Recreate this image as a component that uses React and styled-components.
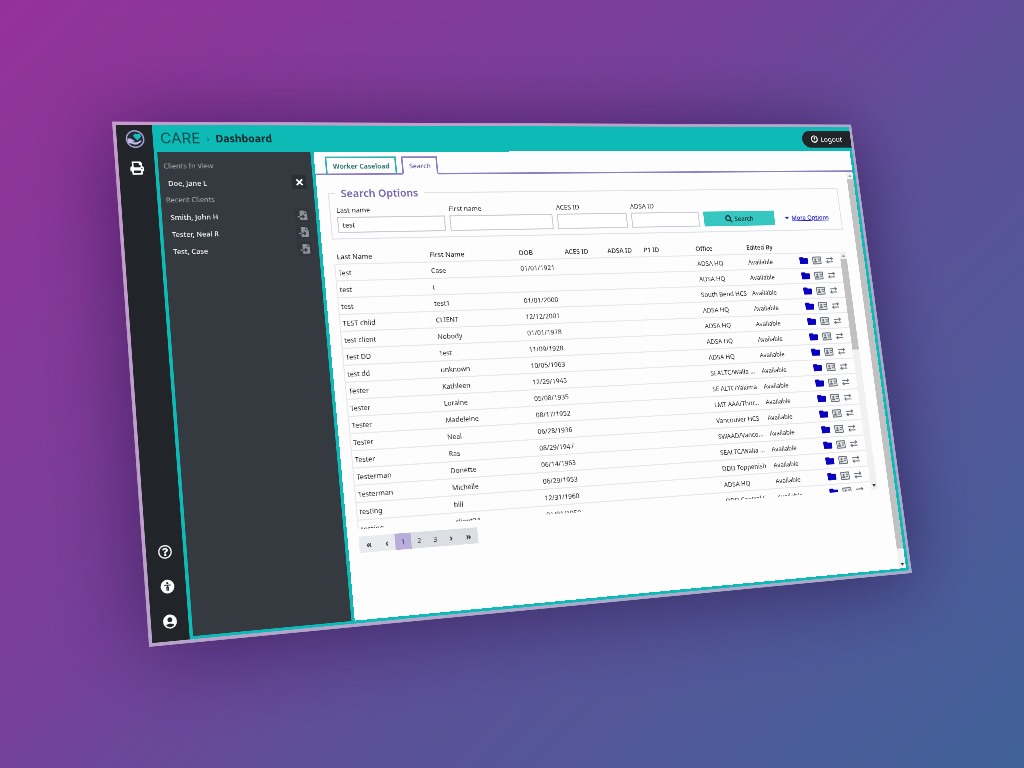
import React, { useEffect, useState } from "react";
import styled, { createGlobalStyle } from "styled-components";
import {
  FaPrint,
  FaPowerOff,
  FaTimes,
  FaFileImport,
  FaSearch,
  FaCaretDown,
  FaFolder,
  FaRegQuestionCircle,
} from "react-icons/fa";
import { MdAccountCircle } from "react-icons/md";

const teal = "#0dbab5";
const purple = "#8d7fc4";
const FRAME_W = 1490;
const FRAME_H = 918;
const SCENE_W = 1024;
const SCENE_H = 768;

/* Corners of the tilted window in the scene: top left, top right, bottom right, bottom left. */
const CORNERS = [
  [112, 121.5],
  [851, 124.5],
  [912, 573],
  [149, 647],
];

function tilt(scale, left, top) {
  const [[x0, y0], [x1, y1], [x2, y2], [x3, y3]] = CORNERS.map(([x, y]) => [
    left + x * scale,
    top + y * scale,
  ]);
  const dx1 = x1 - x2;
  const dx2 = x3 - x2;
  const dx3 = x0 - x1 + x2 - x3;
  const dy1 = y1 - y2;
  const dy2 = y3 - y2;
  const dy3 = y0 - y1 + y2 - y3;
  const det = dx1 * dy2 - dx2 * dy1;
  const g = (dx3 * dy2 - dx2 * dy3) / det;
  const h = (dx1 * dy3 - dx3 * dy1) / det;
  const m = [
    (x1 - x0 + g * x1) / FRAME_W, (y1 - y0 + g * y1) / FRAME_W, 0, g / FRAME_W,
    (x3 - x0 + h * x3) / FRAME_H, (y3 - y0 + h * y3) / FRAME_H, 0, h / FRAME_H,
    0, 0, 1, 0,
    x0, y0, 0, 1,
  ];
  return `matrix3d(${m.map((n) => n.toFixed(9)).join(",")})`;
}

function useTilt() {
  const read = () => {
    const scale = Math.min(window.innerWidth / SCENE_W, window.innerHeight / SCENE_H);
    return tilt(
      scale,
      (window.innerWidth - SCENE_W * scale) / 2,
      (window.innerHeight - SCENE_H * scale) / 2
    );
  };
  const [value, setValue] = useState(read);
  useEffect(() => {
    const update = () => setValue(read());
    window.addEventListener("resize", update);
    return () => window.removeEventListener("resize", update);
  }, []);
  return value;
}

const GlobalStyle = createGlobalStyle`
  *, *::before, *::after { box-sizing: border-box; }
  body { margin: 0; }
  body, button, input {
    font-family: "Noto Sans", "Open Sans", sans-serif;
    font-size: 13px;
    line-height: 18px;
  }
  button { border: 0; padding: 0; background: none; color: inherit; cursor: pointer; }
  svg { display: block; flex: none; }
`;

const Scene = styled.div`
  position: relative;
  min-height: 100vh;
  overflow: hidden;
  background: linear-gradient(135deg, #953299 0%, #754199 42%, #5d5099 60%, #406299 100%);
`;

const Frame = styled.div`
  position: absolute;
  top: 0;
  left: 0;
  width: ${FRAME_W}px;
  height: ${FRAME_H}px;
  transform-origin: 0 0;
  display: flex;
  border: 6px solid rgba(255, 255, 255, 0.5);
  background: ${teal};
  background-clip: padding-box;
  box-shadow: 0 8px 140px rgba(34, 12, 64, 0.6);
`;

const Rail = styled.nav`
  flex: none;
  width: 63px;
  padding: 9px 0 4px;
  display: flex;
  flex-direction: column;
  align-items: center;
  background: #212529;
  color: #fff;
`;

const LogoLink = styled.a`
  height: 40px;
`;

const RailButton = styled.button`
  display: grid;
  place-items: center;
  width: 40px;
  height: 59px;
`;

const RailSpacer = styled.div`
  flex: 1;
`;

const Shell = styled.div`
  flex: 1;
  min-width: 0;
  display: flex;
  flex-direction: column;
`;

const Header = styled.header`
  flex: none;
  height: 50px;
  padding-left: 13px;
  display: flex;
  align-items: center;
  color: #10262b;
`;

const Brand = styled.a`
  font-family: Inter, sans-serif;
  font-size: 27px;
  font-weight: 400;
  line-height: 36px;
  color: #0b4c50;
  text-decoration: none;
`;

const Crumb = styled.span`
  margin: 0 9px;
  width: 9px;
  font-size: 16px;
  font-weight: 600;
  color: #08706f;
  text-align: center;
`;

const PageTitle = styled.h1`
  margin: 0;
  flex: 1;
  font-size: 19px;
  line-height: 26px;
  font-weight: 700;
`;

const Logout = styled.button`
  width: 112px;
  height: 35px;
  padding-left: 20px;
  display: flex;
  align-items: center;
  gap: 6px;
  border-radius: 18px 0 0 18px;
  background: #212529;
  color: #fff;
  font-size: 15px;
`;

const Body = styled.div`
  flex: 1;
  min-height: 0;
  display: flex;
  gap: 6px;
  padding: 0 6px 5px 6px;
`;

const Sidebar = styled.aside`
  flex: none;
  width: 277px;
  padding: 10px 12px 0 9px;
  background: #343a40;
`;

const SideHeading = styled.h2`
  margin: 0;
  font-size: 13px;
  font-weight: 400;
  line-height: 31px;
  color: #a9adb3;
`;

const SideList = styled.ul`
  margin: 0;
  padding: 0 0 0 6px;
  list-style: none;
`;

const SideItem = styled.li`
  height: 31px;
  display: flex;
  align-items: center;
  justify-content: space-between;
  color: #fff;
  font-weight: 500;
`;

const SideButton = styled.button`
  width: 27px;
  height: 27px;
  display: grid;
  place-items: center;
  background: ${(p) => (p.$muted ? "#30363b" : "#2a2f34")};
  color: ${(p) => (p.$muted ? "#8d939a" : "#fff")};
`;

const Main = styled.main`
  flex: 1;
  min-width: 0;
  display: flex;
  flex-direction: column;
  background: #fdfdfd;
  color: #2b2b2b;
`;

const Tabs = styled.div`
  flex: none;
  height: 44px;
  padding-left: 20px;
  display: flex;
  align-items: flex-end;
  gap: 10px;
  border-bottom: 3px solid ${purple};
`;

const Tab = styled.button`
  height: 35px;
  padding: 0 11px;
  border: 3px solid ${(p) => (p.$active ? purple : "#2fb3ad")};
  border-bottom-color: ${(p) => (p.$active ? "#fdfdfd" : purple)};
  margin-bottom: -3px;
  background: #fdfdfd;
  color: ${(p) => (p.$active ? "#6a5aa8" : "#1d6b69")};
  font-weight: ${(p) => (p.$active ? 500 : 600)};
`;

const Scroller = styled.div`
  flex: 1;
  min-height: 0;
  display: flex;
`;

const Content = styled.div`
  flex: 1;
  min-width: 0;
  padding: 22px 25px 0 20px;
`;

const Options = styled.fieldset`
  margin: 0;
  padding: 9px 10px 10px 11px;
  border: 2px solid #dfe2e7;
  display: flex;
  align-items: flex-end;
  gap: 9px;
`;

const Legend = styled.legend`
  padding: 0 11px;
  font-size: 20px;
  line-height: 26px;
  font-weight: 600;
  color: #7565b3;
`;

const Field = styled.label`
  display: flex;
  flex-direction: column;
  gap: 4px;
  width: ${(p) => (p.$short ? 145 : 206)}px;
`;

const TextBox = styled.input`
  width: 100%;
  height: 30px;
  padding: 0 7px;
  border: 2px solid #c6cdd8;
  border-radius: 0;
  background: #fff;
  color: #222;
  font-weight: 500;
`;

const SearchButton = styled.button`
  width: 156px;
  height: 30px;
  margin-left: 1px;
  display: flex;
  align-items: center;
  justify-content: center;
  gap: 5px;
  background: #36c7c0;
  color: #10262b;
  font-weight: 500;
`;

const More = styled.a`
  height: 30px;
  margin-left: 12px;
  display: flex;
  align-items: center;
  gap: 3px;
  color: #1c14c4;
  font-weight: 500;
`;

const Results = styled.div`
  margin-top: 19px;
  display: flex;
  height: 508px;
`;

const Table = styled.table`
  flex: 1;
  min-width: 0;
  display: flex;
  flex-direction: column;
  border-spacing: 0;
`;

const Head = styled.thead`
  display: block;
`;

const Rows = styled.tbody`
  flex: 1;
  min-height: 0;
  display: block;
  overflow: hidden;
  border-left: 2px solid #e6e8eb;
`;

const Row = styled.tr`
  display: grid;
  grid-template-columns: 176px 176px 93px 88px 76px 111px 111px 115px 1fr;
  height: ${(p) => (p.$head ? 26 : 31)}px;
  align-items: center;
  border-top: ${(p) => (p.$head ? 0 : 2)}px solid #e6e8eb;
`;

const HeadCell = styled.th`
  padding: 0 0 0 6px;
  text-align: left;
  font-weight: 500;
  white-space: nowrap;
`;

const Cell = styled.td`
  padding: 0 0 0 4px;
  white-space: nowrap;
`;

const Actions = styled.div`
  display: flex;
  align-items: center;
  gap: 10px;
  color: #6c757d;
`;

const IconButton = styled.button`
  color: ${(p) => (p.$primary ? "#0a00c0" : "inherit")};
`;

const Bar = styled.div`
  flex: none;
  width: 15px;
  margin-top: ${(p) => (p.$below ? 26 : 0)}px;
  display: flex;
  flex-direction: column;
  background: #f1f1f1;
`;

const BarArrow = styled.span`
  display: grid;
  place-items: center;
  height: 16px;
  color: ${(p) => (p.$dim ? "#a0a0a0" : "#404040")};
`;

const Thumb = styled.span`
  flex: ${(p) => p.$share};
  background: #c1c1c1;
`;

const Track = styled.span`
  flex: ${(p) => p.$share};
`;

const Pager = styled.nav`
  margin-top: 13px;
  display: flex;
`;

const PageButton = styled.button`
  width: ${(p) => (p.$wide ? 36 : 30)}px;
  height: 29px;
  background: ${(p) => (p.$active ? "#b9aedb" : p.$off ? "#e9ecef" : "#dbdfe4")};
  color: ${(p) => (p.$active ? "#43386f" : "#333")};
  font-size: ${(p) => (p.$symbol ? 16 : 13)}px;
  font-weight: ${(p) => (p.$symbol ? 700 : 400)};
`;

const Logo = () => (
  <svg width="34" height="34" viewBox="0 0 34 34" aria-hidden="true">
    <circle cx="17" cy="17" r="15" fill="#252a3c" stroke="#aaa2d2" strokeWidth="2.600" />
    <path
      d="M21 19.500 15.600 14a3.800 3.800 0 0 1 5.400-5.400 3.800 3.800 0 0 1 5.400 5.400z"
      fill="#18bdb5"
    />
    <path
      d="M3.500 17c3-2 5.500-1.400 8 .4l3.500 2.200c1.500 1.200.4 2.600-1.500 2.200l-2.500-.6 3.500 2 5.500-.2 6-3.400c1.600-.7 2.400.8 1.200 2-2.700 2.600-5.500 5-8.500 5.400-3 .5-5.500-.5-8-1.500l-6-1z"
      fill="#c3bce4"
    />
  </svg>
);

const AccessIcon = () => (
  <svg width="24" height="24" viewBox="0 0 24 24" aria-hidden="true">
    <circle cx="12" cy="12" r="11.500" fill="#fff" />
    <circle cx="12" cy="6" r="1.800" fill="#212529" />
    <path d="M6.500 9.600h11M12 9.600v5M10.800 12v7M13.200 12v7" stroke="#212529" strokeWidth="1.700" fill="none" />
  </svg>
);

const CardIcon = () => (
  <svg width="20" height="16" viewBox="0 0 20 16" aria-hidden="true">
    <rect x="1" y="1" width="18" height="14" rx="1" fill="#e4e6e8" stroke="currentColor" strokeWidth="2" />
    <circle cx="6.800" cy="6" r="2.200" fill="currentColor" />
    <path d="M3.200 12.200c0-2.600 1.300-3.700 3.600-3.700s3.600 1.100 3.600 3.700z" fill="currentColor" />
    <path d="M12 5.500h5M12 9.500h5" stroke="currentColor" strokeWidth="2" />
  </svg>
);

const SwapIcon = () => (
  <svg width="18" height="14" viewBox="0 0 18 14" fill="none" stroke="currentColor" strokeWidth="2">
    <path d="M1 4h15M12.500 1l3.500 3-3.500 3M17 10.500H2M5.500 7.500 2 10.500l3.500 3" />
  </svg>
);

const Arrow = ({ up }) => (
  <svg width="8" height="5" viewBox="0 0 8 5" fill="currentColor" aria-hidden="true">
    <path d={up ? "M0 5 4 0l4 5z" : "M0 0l4 5 4-5z"} />
  </svg>
);

const Scrollbar = ({ below, share }) => (
  <Bar $below={below} aria-hidden="true">
    <BarArrow $dim><Arrow up /></BarArrow>
    <Thumb $share={share} />
    <Track $share={100 - share} />
    <BarArrow><Arrow /></BarArrow>
  </Bar>
);

const COLUMNS = ["Last Name", "First Name", "DOB", "ACES ID", "ADSA ID", "P1 ID", "Office", "Edited By"];

const CLIENTS = [
  ["Test", "Case", "01/01/1921", "ADSA HQ"],
  ["test", "t", "", "ADSA HQ"],
  ["test", "test1", "01/01/2000", "South Bend HCS"],
  ["TEST child", "CLIENT", "12/12/2001", "ADSA HQ"],
  ["test client", "Nobody", "01/01/1978", "ADSA HQ"],
  ["Test DD", "Test", "11/09/1928", "ADSA HQ"],
  ["test dd", "unknown", "10/05/1963", "ADSA HQ"],
  ["Tester", "Kathleen", "12/29/1945", "SEALTC/Walla ..."],
  ["Tester", "Loraine", "05/08/1935", "SE ALTC/Yakima"],
  ["Tester", "Madeleine", "08/17/1952", "LMT AAA/Thur..."],
  ["Tester", "Neal", "06/28/1936", "Vancouver HCS"],
  ["Tester", "Ras", "08/29/1947", "SWAAD/Vanco..."],
  ["Testerman", "Donette", "06/14/1963", "SEALTC/Walla ..."],
  ["Testerman", "Michelle", "06/29/1953", "DDD Toppenish"],
  ["testing", "bill", "12/31/1960", "ADSA HQ"],
  ["testing", "client34", "01/01/1950", "DDD Central F..."],
];

const RECENT = ["Smith, John H", "Tester, Neal R", "Test, Case"];

export default function App() {
  const transform = useTilt();
  return (
    <Scene>
      <GlobalStyle />
      <Frame style={{ transform }}>
        <Rail aria-label="Tools">
          <LogoLink href="#home" aria-label="Home"><Logo /></LogoLink>
          <RailButton aria-label="Print"><FaPrint size={24} /></RailButton>
          <RailSpacer />
          <RailButton aria-label="Help"><FaRegQuestionCircle size={24} /></RailButton>
          <RailButton aria-label="Accessibility"><AccessIcon /></RailButton>
          <RailButton aria-label="Account"><MdAccountCircle size={28} /></RailButton>
        </Rail>
        <Shell>
          <Header>
            <Brand href="#home">CARE</Brand>
            <Crumb>›</Crumb>
            <PageTitle>Dashboard</PageTitle>
            <Logout><FaPowerOff size={16} />Logout</Logout>
          </Header>
          <Body>
            <Sidebar>
              <SideHeading>Clients In View</SideHeading>
              <SideList>
                <SideItem>
                  Doe, Jane L
                  <SideButton aria-label="Close Doe, Jane L"><FaTimes size={18} /></SideButton>
                </SideItem>
              </SideList>
              <SideHeading>Recent Clients</SideHeading>
              <SideList>
                {RECENT.map((name) => (
                  <SideItem key={name}>
                    {name}
                    <SideButton $muted aria-label={`Open ${name}`}><FaFileImport size={18} /></SideButton>
                  </SideItem>
                ))}
              </SideList>
            </Sidebar>
            <Main>
              <Tabs role="tablist">
                <Tab role="tab">Worker Caseload</Tab>
                <Tab role="tab" aria-selected="true" $active>Search</Tab>
              </Tabs>
              <Scroller>
                <Content>
                  <Options>
                    <Legend>Search Options</Legend>
                    <Field>Last name<TextBox defaultValue="test" /></Field>
                    <Field>First name<TextBox /></Field>
                    <Field $short>ACES ID<TextBox /></Field>
                    <Field $short>ADSA ID<TextBox /></Field>
                    <SearchButton><FaSearch size={15} />Search</SearchButton>
                    <More href="#more"><FaCaretDown size={14} />More Options</More>
                  </Options>
                  <Results>
                    <Table>
                      <Head>
                        <Row $head>
                          {COLUMNS.map((name) => <HeadCell key={name}>{name}</HeadCell>)}
                        </Row>
                      </Head>
                      <Rows>
                        {CLIENTS.map(([last, first, dob, office], i) => (
                          <Row key={i}>
                            <Cell>{last}</Cell>
                            <Cell>{first}</Cell>
                            <Cell>{dob}</Cell>
                            <Cell />
                            <Cell />
                            <Cell />
                            <Cell>{office}</Cell>
                            <Cell>Available</Cell>
                            <Cell>
                              <Actions>
                                <IconButton $primary aria-label="Open folder"><FaFolder size={19} /></IconButton>
                                <IconButton aria-label="Contact card"><CardIcon /></IconButton>
                                <IconButton aria-label="Transfer"><SwapIcon /></IconButton>
                              </Actions>
                            </Cell>
                          </Row>
                        ))}
                      </Rows>
                    </Table>
                    <Scrollbar below share={41} />
                  </Results>
                  <Pager aria-label="Pages">
                    <PageButton $wide $symbol $off aria-label="First page">«</PageButton>
                    <PageButton $symbol $off aria-label="Previous page">‹</PageButton>
                    <PageButton $active>1</PageButton>
                    <PageButton>2</PageButton>
                    <PageButton>3</PageButton>
                    <PageButton $symbol aria-label="Next page">›</PageButton>
                    <PageButton $wide $symbol aria-label="Last page">»</PageButton>
                  </Pager>
                </Content>
                <Scrollbar share={97} />
              </Scroller>
            </Main>
          </Body>
        </Shell>
      </Frame>
    </Scene>
  );
}
